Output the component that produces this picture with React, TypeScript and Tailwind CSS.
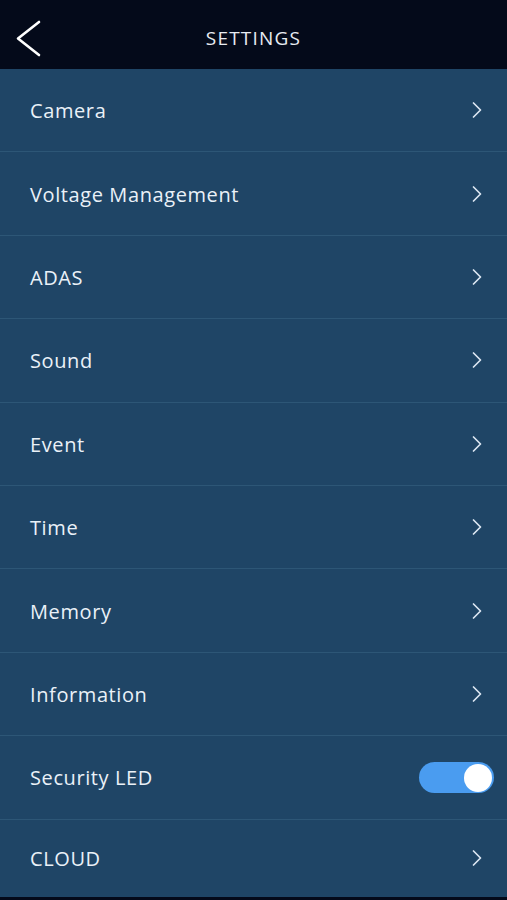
import React, { useState } from "react";

const items = [
  "Camera",
  "Voltage Management",
  "ADAS",
  "Sound",
  "Event",
  "Time",
  "Memory",
  "Information",
  "Security LED",
  "CLOUD",
];

function Chevron() {
  return (
    <svg width="12" height="18" viewBox="0 0 12 18" fill="none">
      <path d="M2.5 2 L9.5 9 L2.5 16" stroke="#dbe6f2" strokeWidth="1.7" strokeLinecap="round" strokeLinejoin="round" />
    </svg>
  );
}

export default function App() {
  const [on, setOn] = useState(true);
  return (
    <div className="w-[507px] h-[900px] bg-[#040a1a] flex flex-col overflow-hidden" style={{ fontFamily: '"Open Sans", "Liberation Sans", sans-serif' }}>
      <div className="h-[69px] shrink-0 flex items-center relative bg-[#040a1a] pt-[8px]">
        <div className="w-[60px] pl-[15px] flex items-center">
          <svg width="30" height="40" viewBox="0 0 30 40" fill="none">
            <path d="M24 3 L3 19.5 L24 36" stroke="#ffffff" strokeWidth="2.6" strokeLinecap="round" strokeLinejoin="round" />
          </svg>
        </div>
        <div className="flex-1 text-center text-[#e8ecf2] text-[19px] tracking-[1.2px] pr-[60px]">SETTINGS</div>
      </div>
      <div className="flex flex-col bg-[#1f4566]">
        {items.map((label, i) => (
          <div
            key={label}
            className={
              "flex items-center justify-between pl-[30px] " +
              (i === items.length - 1 ? "h-[77px]" : "h-[83.4px] border-b border-[#2d5676]") +
              (label === "Security LED" ? " pr-[13px]" : " pr-[24px]")
            }
          >
            <span className="text-[#eaf1f8] text-[20px] tracking-[0.6px] pt-[2px]">{label}</span>
            {label === "Security LED" ? (
              <button
                onClick={() => setOn(!on)}
                className="w-[75px] h-[31px] rounded-full bg-[#4a9cf0] flex items-center justify-end pr-[2px] mt-[1px]"
              >
                <span className="w-[28px] h-[28px] rounded-full bg-white block" />
              </button>
            ) : (
              <Chevron />
            )}
          </div>
        ))}
      </div>
      <div className="flex-1 bg-[#040a1a]" />
    </div>
  );
}
